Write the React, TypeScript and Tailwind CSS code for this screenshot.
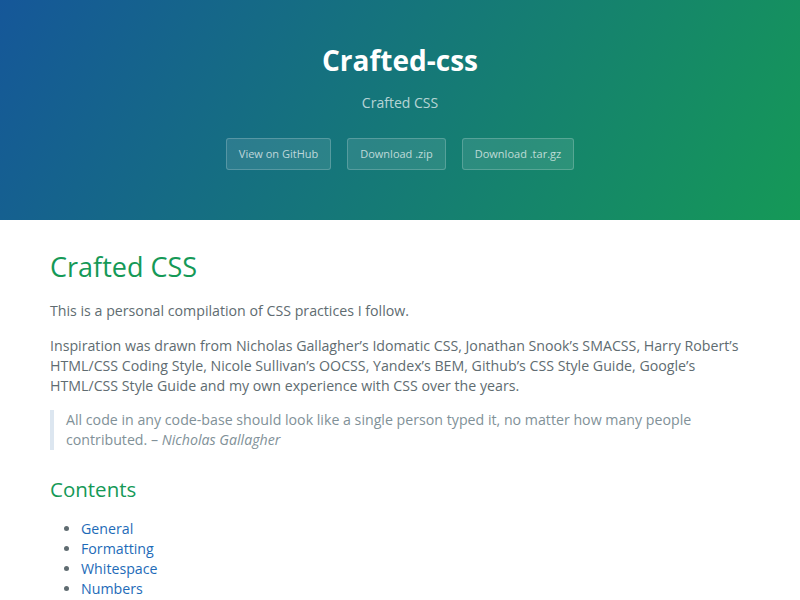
const buttons = ['View on GitHub', 'Download .zip', 'Download .tar.gz'];
const contents = ['General', 'Formatting', 'Whitespace', 'Numbers'];

export default function App() {
  return (
    <div className="min-h-[600px] bg-white font-['Open_Sans',sans-serif] text-[#606c71]">
      <header className="flex h-[220px] flex-col items-center bg-[linear-gradient(120deg,#155799,#159957)] pt-[40px] text-center text-white">
        <h1 className="text-[28px] font-bold leading-[40px]">Crafted-css</h1>
        <h2 className="mt-[13px] text-[14px] leading-[20px] text-white/70">Crafted CSS</h2>
        <div className="mt-[25px] flex gap-4">
          {buttons.map((b) => (
            <a
              key={b}
              href="#"
              className="rounded-[3px] border border-white/20 bg-white/10 px-[12px] py-[6px] text-[11px] leading-[18px] text-white/70"
            >
              {b}
            </a>
          ))}
        </div>
      </header>

      <main className="pl-[50px] pr-[45px] pt-[29px] text-[14.2px] leading-[20px]">
        <h1 className="text-[27px] leading-[36px] text-[#159957]">Crafted CSS</h1>
        <p className="mt-[16px]">This is a personal compilation of CSS practices I follow.</p>
        <p className="mt-[15px]">
          Inspiration was drawn from Nicholas Gallagher’s Idomatic CSS, Jonathan Snook’s SMACSS, Harry Robert’s
          HTML/CSS Coding Style, Nicole Sullivan’s OOCSS, Yandex’s BEM, Github’s CSS Style Guide, Google’s
          HTML/CSS Style Guide and my own experience with CSS over the years.
        </p>
        <blockquote className="mt-[14px] border-l-4 border-[#dce6f0] pl-[12px] text-[#819198]">
          All code in any code-base should look like a single person typed it, no matter how many people
          contributed. – <em>Nicholas Gallagher</em>
        </blockquote>
        <h2 className="mt-[24px] text-[20.5px] leading-[30px] text-[#159957]">Contents</h2>
        <ul className="mt-[15px] list-disc pl-[31px] marker:text-[#606c71]">
          {contents.map((c) => (
            <li key={c}>
              <a href="#" className="text-[#1e6bb8]">
                {c}
              </a>
            </li>
          ))}
        </ul>
      </main>
    </div>
  );
}
